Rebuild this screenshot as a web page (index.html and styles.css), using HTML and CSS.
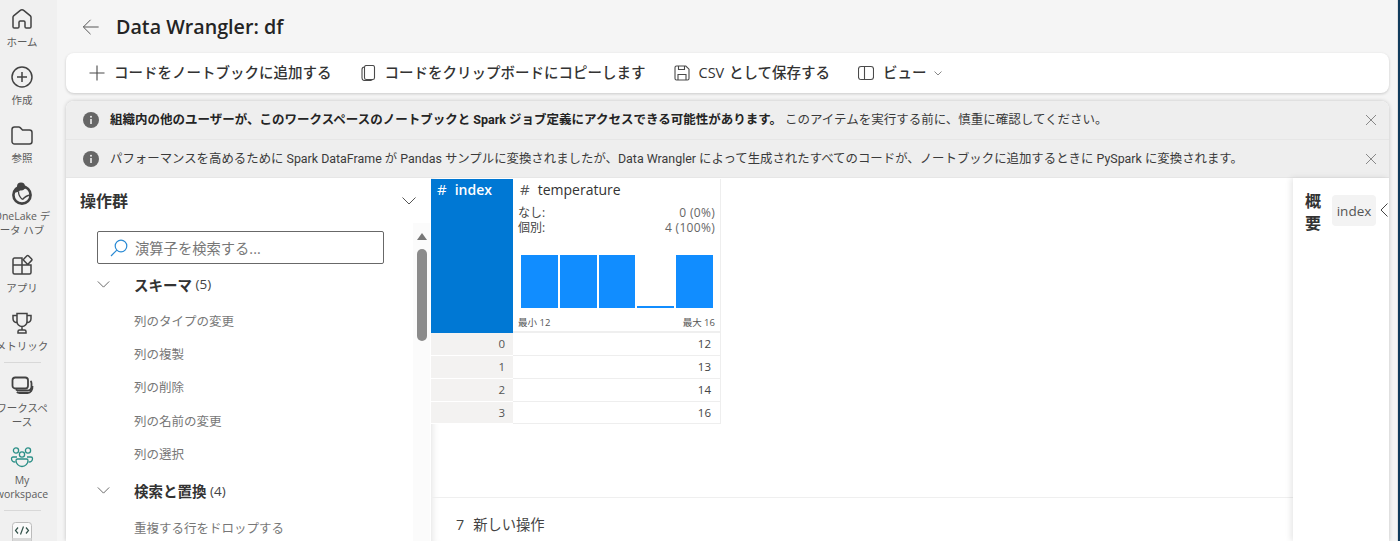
FILE: index.html
```html
<!DOCTYPE html>
<html lang="ja">
<head>
<meta charset="utf-8">
<title>Data Wrangler: df</title>
<link rel="stylesheet" href="styles.css">
</head>
<body>
<nav class="rail">
  <div class="rail-item">
    <svg class="rail-icon" viewBox="0 0 24 24"><path d="M10 3.600 3.600 8.900a1.800 1.800 0 0 0-.6 1.400v9.400c0 .8.6 1.300 1.300 1.300h3.400c.7 0 1.300-.5 1.300-1.300v-4.400c0-.7.6-1.300 1.300-1.300h3.400c.7 0 1.300.6 1.300 1.300v4.400c0 .8.6 1.300 1.300 1.300h3.400c.7 0 1.300-.5 1.300-1.300v-9.400c0-.5-.2-1-.6-1.400L14 3.600a3.100 3.100 0 0 0-4 0Z"/></svg>
    <span class="rail-label">ホーム</span>
  </div>
  <div class="rail-item">
    <svg class="rail-icon" viewBox="0 0 24 24"><circle cx="12" cy="12" r="10"/><path d="M12 7v10M7 12h10"/></svg>
    <span class="rail-label">作成</span>
  </div>
  <div class="rail-item">
    <svg class="rail-icon" viewBox="0 0 24 24"><path d="M2 6.500C2 5.100 3.100 4 4.500 4h4.300c.5 0 1 .2 1.400.6L12.500 7h7c1.400 0 2.500 1.100 2.500 2.500v9c0 1.400-1.100 2.500-2.500 2.500h-15A2.500 2.500 0 0 1 2 18.500Z"/></svg>
    <span class="rail-label">参照</span>
  </div>
  <div class="rail-item">
    <svg class="rail-icon onelake" viewBox="0 0 24 24"><circle cx="12" cy="14" r="8.600"/><circle class="fill" cx="11" cy="5.500" r="4"/><path class="fill" d="M4 12c1.500-4 4-6 7-6 2 0 3.500.4 5 1.500-3 .5-6 1-7 3-1.500.5-3 1-5 1.500Z"/><path class="thin" d="M8.500 10.500c0 3 1.500 6 4 8M12.500 18.500c2-2.500 4.500-4 8-4.500"/></svg>
    <span class="rail-label">OneLake データ ハブ</span>
  </div>
  <div class="rail-item">
    <svg class="rail-icon" viewBox="0 0 24 24"><path d="M12 12V5H4.500C3.700 5 3 5.700 3 6.500V12ZM3 12h9v9H4.500A1.500 1.500 0 0 1 3 19.500ZM12 12h9v7.500c0 .8-.7 1.500-1.500 1.500H12ZM13.800 6 17 2.800c.4-.4 1-.4 1.400 0L21.700 6c.4.400.4 1 0 1.400L18.400 10.700c-.4.400-1 .4-1.400 0L13.800 7.400c-.4-.4-.4-1 0-1.400Z"/></svg>
    <span class="rail-label">アプリ</span>
  </div>
  <div class="rail-item before-sep">
    <svg class="rail-icon" viewBox="0 0 24 24"><path d="M7 2.500h10v8a5 5 0 0 1-10 0ZM7 4.500H3v3c0 2.500 2 4 4.300 4.300M17 4.500h4v3c0 2.500-2 4-4.300 4.300M12 15.500V19M8 22v-1.500C8 19.700 8.700 19 9.500 19h5c.8 0 1.500.7 1.500 1.500V22Z"/></svg>
    <span class="rail-label">メトリック</span>
  </div>
  <hr class="rail-sep">
  <div class="rail-item">
    <svg class="rail-icon rail-icon-heavy" viewBox="0 0 24 24"><rect x="2.500" y="4.500" width="15.500" height="11" rx="2.800"/><path d="M20.500 8c.6.500 1 1.200 1 2.200v3.300c0 2.500-1.500 4-4 4H9c-1.300 0-2.300-.4-3-1.200M22.500 13c.2 3.800-1.800 7-5 7H9.500c-1.200 0-2-.3-2.700-.9"/></svg>
    <span class="rail-label">ワークスペース</span>
  </div>
  <div class="rail-item before-sep">
    <svg class="rail-icon teal" viewBox="0 0 24 24"><circle cx="6" cy="5.500" r="2.600"/><circle cx="18" cy="5.500" r="2.600"/><circle cx="12" cy="9.500" r="2.600"/><path d="M7 12H3c-.8 0-1.500.7-1.500 1.500 0 2.300 1.700 3.500 3.800 3.500M17 12h4c.8 0 1.500.7 1.500 1.500 0 2.300-1.700 3.500-3.800 3.500M7.500 14h9c.8 0 1.500.7 1.500 1.500 0 3-2.500 6-6 6s-6-3-6-6c0-.8.7-1.500 1.500-1.500Z"/></svg>
    <span class="rail-label">My workspace</span>
  </div>
  <hr class="rail-sep">
  <div class="rail-item">
    <svg class="rail-code" viewBox="0 0 20 32"><rect class="code-box" x=".5" y=".5" width="19" height="31" rx="3"/><path class="code-band" d="M.5 16h19v5H.5Z"/><path class="code-mark" d="M6 5.500 3.500 8.500 6 11.500M14 5.500l2.500 3-2.500 3M11.500 4.500l-3 8"/></svg>
  </div>
</nav>

<main class="main">
  <header class="title-row">
    <svg class="back" viewBox="0 0 20 20"><path d="M18.500 10H1.500M9.500 2l-8 8 8 8"/></svg>
    <h1 class="title">Data Wrangler: df</h1>
  </header>

  <div class="toolbar">
    <button class="tool">
      <svg viewBox="0 0 16 16"><path d="M8 .500v15M.500 8h15"/></svg>
      コードをノートブックに追加する
    </button>
    <button class="tool">
      <svg viewBox="0 0 16 16"><rect x="4.500" y=".5" width="10" height="14" rx="1.800"/><path d="M4.500 2C2.800 2 2 3 2 4.500v8.500c0 1.700 1 2.500 2.500 2.500H10c1.200 0 2-.3 2.500-1"/></svg>
      コードをクリップボードにコピーします
    </button>
    <button class="tool">
      <svg viewBox="0 0 16 16"><path d="M1 2.500C1 1.700 1.700 1 2.500 1h9.300L15 4.200v9.300c0 .8-.7 1.500-1.500 1.500h-11c-.8 0-1.500-.7-1.500-1.500Z"/><path d="M4.500 1v3.500h6V1M4 15V9.500h8V15"/></svg>
      <span class="tool-csv">CSV として保存する</span>
    </button>
    <button class="tool">
      <svg viewBox="0 0 16 16"><rect x=".5" y="1.500" width="15" height="13" rx="2.500"/><path d="M6.500 1.500v13"/></svg>
      ビュー
      <svg class="tool-caret" viewBox="0 0 8 8"><path d="M.5 2.500 4 6l3.500-3.500"/></svg>
    </button>
  </div>

  <section class="card">
    <div class="notice">
      <svg class="info" viewBox="0 0 16 16"><circle cx="8" cy="8" r="8"/><rect class="info-mark" x="7.200" y="7" width="1.600" height="5"/><circle class="info-mark" cx="8" cy="4.800" r="1"/></svg>
      <p class="notice-text"><b>組織内の他のユーザーが、このワークスペースのノートブックと Spark ジョブ定義にアクセスできる可能性があります。</b> このアイテムを実行する前に、慎重に確認してください。</p>
      <svg class="close" viewBox="0 0 12 12"><path d="M1 1l10 10M11 1 1 11"/></svg>
    </div>
    <div class="notice notice-last">
      <svg class="info" viewBox="0 0 16 16"><circle cx="8" cy="8" r="8"/><rect class="info-mark" x="7.200" y="7" width="1.600" height="5"/><circle class="info-mark" cx="8" cy="4.800" r="1"/></svg>
      <p class="notice-text">パフォーマンスを高めるために Spark DataFrame が Pandas サンプルに変換されましたが、Data Wrangler によって生成されたすべてのコードが、ノートブックに追加するときに PySpark に変換されます。</p>
      <svg class="close" viewBox="0 0 12 12"><path d="M1 1l10 10M11 1 1 11"/></svg>
    </div>

    <div class="workspace">
      <aside class="ops">
        <div class="ops-head">
          <h2 class="ops-title">操作群</h2>
          <svg class="chev ops-chev" viewBox="0 0 14 8"><path d="M.5.5 7 7 13.500.5"/></svg>
        </div>
        <div class="ops-body">
          <div class="ops-list">
            <div class="search">
              <svg viewBox="0 0 18 18"><circle cx="11" cy="7" r="5.800"/><path d="M6.800 11.200 1 17"/></svg>
              <span>演算子を検索する...</span>
            </div>
            <div class="group"><svg class="chev" viewBox="0 0 14 8"><path d="M.5.5 7 7 13.500.5"/></svg><b>スキーマ</b>&nbsp;<span>(5)</span></div>
            <div class="op">列のタイプの変更</div>
            <div class="op">列の複製</div>
            <div class="op">列の削除</div>
            <div class="op">列の名前の変更</div>
            <div class="op">列の選択</div>
            <div class="group group-next"><svg class="chev" viewBox="0 0 14 8"><path d="M.5.5 7 7 13.500.5"/></svg><b>検索と置換</b>&nbsp;<span>(4)</span></div>
            <div class="op">重複する行をドロップする</div>
          </div>
          <div class="scrollbar">
            <span class="scroll-up"></span>
            <span class="scroll-thumb"></span>
          </div>
        </div>
      </aside>

      <div class="center">
        <div class="grid-area">
          <div class="data-grid">
            <div class="head-index"><span class="hash">#</span>index</div>
            <div class="head-col">
              <div class="head-name"><span class="hash">#</span>temperature</div>
              <div class="stat"><span>なし:</span><span class="stat-val">0 (0%)</span></div>
              <div class="stat"><span>個別:</span><span class="stat-val">4 (100%)</span></div>
              <div class="hist">
                <span class="bar"></span><span class="bar"></span><span class="bar"></span><span class="bar bar-low"></span><span class="bar"></span>
              </div>
              <div class="range"><span>最小 12</span><span>最大 16</span></div>
            </div>
            <div class="idx">0</div><div class="val">12</div>
            <div class="idx">1</div><div class="val">13</div>
            <div class="idx">2</div><div class="val">14</div>
            <div class="idx">3</div><div class="val">16</div>
          </div>
        </div>
        <div class="steps"><span>7</span><span>新しい操作</span></div>
      </div>

      <aside class="summary">
        <h2 class="summary-title">概要</h2>
        <span class="chip">index</span>
        <svg class="summary-chev" viewBox="0 0 8 14"><path d="M7.500.5 1 7l6.500 6.500"/></svg>
      </aside>
    </div>
  </section>
</main>
<div class="edge"></div>
</body>
</html>
```
FILE: styles.css
```css
* { box-sizing: border-box; }
html, body { margin: 0; height: 541px; overflow: hidden; }
body {
  display: flex;
  background: #f5f5f5;
  color: #242424;
  font-family: "Open Sans", "Noto Sans CJK JP", sans-serif;
}
svg { fill: none; stroke: currentColor; flex: none; }

.edge {
  width: 3px;
  flex: none;
  background: #0f3a5c;
  border-left: 1px solid #e0e0e0;
}

.rail {
  width: 57px;
  flex: none;
  background: #f0f0f0;
  padding-top: 7px;
  overflow: hidden;
}
.rail-item {
  width: 60px;
  margin: 0 0 16px -8px;
  display: flex;
  flex-direction: column;
  align-items: center;
  color: #424242;
}
.rail-item.before-sep { margin-bottom: 9px; }
.rail-icon { width: 24px; height: 24px; stroke-width: 1.500; stroke: #424242; }
.rail-icon-heavy { stroke-width: 1.800; }
.rail-icon.teal { stroke: #2b8f87; stroke-width: 1.300; }
.rail-code { width: 20px; height: 32px; margin-top: 1px; }
.code-box { fill: #fafafa; stroke: #bbb; stroke-width: 1; }
.code-band { fill: #d9d9d9; stroke: none; }
.code-mark { stroke: #33524a; stroke-width: 1.200; }
.onelake { stroke-width: 2.600; }
.onelake .fill { fill: #424242; stroke: none; }
.onelake .thin { stroke-width: 1.300; }
.rail-label {
  margin-top: 4px;
  font-size: 10.500px;
  line-height: 14px;
  text-align: center;
  color: #5c5c5c;
}
.rail-sep {
  width: 37px;
  margin: 0 0 10px 4px;
  border: 0;
  border-top: 1px solid #d8d8d8;
}

.main {
  flex: 1;
  min-width: 0;
  padding: 0 8px 0 9px;
  display: flex;
  flex-direction: column;
}
.title-row {
  height: 53px;
  flex: none;
  display: flex;
  align-items: center;
  padding-left: 16px;
}
.back { width: 18px; height: 18px; stroke: #555; stroke-width: 1.100; }
.title { margin: 0 0 0 16px; font-size: 19.700px; font-weight: 600; line-height: 26px; color: #242424; }

.toolbar {
  height: 40px;
  background: #fff;
  border-radius: 8px;
  box-shadow: 0 1px 3px rgba(0,0,0,.18);
  display: flex;
  align-items: center;
  padding-left: 23px;
  gap: 28px;
  flex: none;
}
.tool {
  display: flex;
  align-items: center;
  gap: 9px;
  padding: 0;
  border: 0;
  background: none;
  font: 500 14.500px/20px "Open Sans", "Noto Sans CJK JP", sans-serif;
  color: #333;
}
.tool-csv { word-spacing: 1px; }
.tool svg { width: 16px; height: 16px; stroke: #4a4a4a; stroke-width: 1.100; }
.tool .tool-caret { width: 8px; height: 8px; margin-left: -2px; stroke: #888; stroke-width: 1; }

.card {
  margin-top: 8px;
  flex: 1;
  min-height: 0;
  background: #fff;
  border-radius: 8px 8px 0 0;
  box-shadow: 0 0 4px rgba(0,0,0,.2);
  display: flex;
  flex-direction: column;
  overflow: hidden;
}
.notice {
  height: 39px;
  flex: none;
  background: #eee;
  border-bottom: 1px solid #e6e6e6;
  display: flex;
  align-items: center;
  padding: 0 12px 0 17px;
  color: #3a3a3a;
}
.notice-last { height: 38px; }
.notice-text {
  flex: 1;
  margin: 0 0 0 11px;
  font-family: Roboto, "Noto Sans CJK JP", sans-serif;
  font-size: 12.500px;
  line-height: 16px;
  white-space: nowrap;
}
.notice-last .notice-text { font-size: 12.420px; }
.notice-text b { font-weight: 700; color: #242424; }
.info { width: 16px; height: 16px; fill: #666; stroke: none; }
.info-mark { fill: #eee; }
.close { width: 12px; height: 12px; stroke: #888; stroke-width: 1; }

.workspace { flex: 1; min-height: 0; display: flex; }

.ops { width: 365px; flex: none; display: flex; flex-direction: column; padding-top: 1px; }
.ops-head {
  height: 44px;
  flex: none;
  display: flex;
  align-items: center;
  justify-content: space-between;
  padding: 0 15px 0 14px;
}
.ops-title { margin: 0; font-size: 16px; font-weight: 700; line-height: 22px; color: #333; }
.ops-chev { width: 14px; height: 8px; }
.chev { stroke: #555; stroke-width: 1; }
.ops-body { flex: 1; min-height: 0; display: flex; }
.ops-list { flex: 1; min-width: 0; padding: 8px 0 0 31px; }
.search {
  width: 287px;
  height: 33px;
  border: 1px solid #686868;
  border-radius: 2px;
  display: flex;
  align-items: center;
  gap: 7px;
  padding-left: 12px;
  font-size: 14.300px;
  color: #777;
}
.search svg { width: 18px; height: 18px; stroke: #2a8ad4; stroke-width: 1.200; }
.group {
  height: 24px;
  margin-top: 8px;
  display: flex;
  align-items: center;
  font-size: 13.500px;
  color: #444;
}
.group b { font-weight: 700; color: #333; font-size: 14.500px; }
.group .chev { width: 13px; height: 7px; margin-right: 24px; }
.group-next { margin-top: 9px; }
.op {
  height: 33.200px;
  padding-left: 37px;
  display: flex;
  align-items: center;
  font-size: 12.500px;
  color: #777;
}
.group + .op { margin-top: 8px; }
.scrollbar {
  width: 17px;
  flex: none;
  margin-right: 1px;
  background: #fbfbfb;
  display: flex;
  flex-direction: column;
  align-items: center;
  padding-top: 10px;
}
.scroll-up {
  width: 0;
  height: 0;
  border: solid transparent;
  border-width: 0 5.500px 7px;
  border-bottom-color: #777;
}
.scroll-thumb { width: 10px; height: 92px; margin-top: 9px; border-radius: 5px; background: #8b8b8b; }

.center {
  flex: 1;
  min-width: 0;
  display: flex;
  flex-direction: column;
  box-shadow: inset 8px 0 8px -8px rgba(0,0,0,.15);
}
.grid-area { height: 320px; flex: none; border-bottom: 1px solid #efefef; }
.data-grid {
  display: grid;
  width: 290px;
  grid-template-columns: 82px 207px;
  grid-template-rows: 154px 23px 23px 23px 22px;
  margin-top: 1px;
  background: #fff;
  border-right: 1px solid #eee;
}
.head-index {
  background: #0078d4;
  color: #fff;
  font-size: 14px;
  font-weight: 600;
  line-height: 20px;
  padding-left: 6px;
}
.hash { font-weight: 400; margin-right: 8px; font-size: 15px; }
.head-col {
  display: flex;
  flex-direction: column;
  padding: 0 5px;
  border-bottom: 2px solid #efefef;
}
.head-name { font-size: 14px; font-weight: 500; line-height: 20px; color: #333; padding-left: 2px; }
.head-name .hash { color: #555; }
.stat {
  display: flex;
  justify-content: space-between;
  font-size: 12px;
  line-height: 15px;
  color: #444;
}
.head-name + .stat { margin-top: 5px; }
.stat-val { color: #666; letter-spacing: .3px; }
.hist {
  height: 53px;
  margin: 20px 2px 0 3px;
  display: flex;
  align-items: flex-end;
  gap: 2px;
}
.bar { flex: 1; height: 100%; background: #118dff; }
.bar-low { height: 2px; }
.range {
  display: flex;
  justify-content: space-between;
  font-size: 9.500px;
  line-height: 14px;
  margin-top: 8px;
  color: #555;
}
.idx, .val {
  font-size: 11.500px;
  line-height: 22px;
  text-align: right;
  padding-right: 9px;
  color: #444;
  border-bottom: 1px solid #eee;
}
.idx { background: #f3f2f1; border-bottom-color: #fff; color: #555; padding-right: 8px; }
.steps {
  display: flex;
  gap: 9px;
  padding: 17px 0 0 25px;
  font-size: 14.300px;
  line-height: 20px;
  color: #444;
}

.summary {
  width: 96px;
  flex: none;
  display: flex;
  align-items: flex-start;
  box-shadow: -2px 0 6px rgba(0,0,0,.1);
  padding: 12px 0 0 12px;
  background: #fff;
}
.summary-title { width: 18px; margin: 0; font-size: 16px; font-weight: 700; line-height: 22px; color: #333; }
.chip {
  margin: 5px 0 0 9px;
  width: 44px;
  height: 31px;
  background: #f3f3f3;
  border-radius: 4px;
  display: flex;
  align-items: center;
  justify-content: center;
  font-size: 13.500px;
  color: #555;
}
.summary-chev { width: 8px; height: 14px; margin: 13px 0 0 4px; stroke: #444; stroke-width: 1; }
```
